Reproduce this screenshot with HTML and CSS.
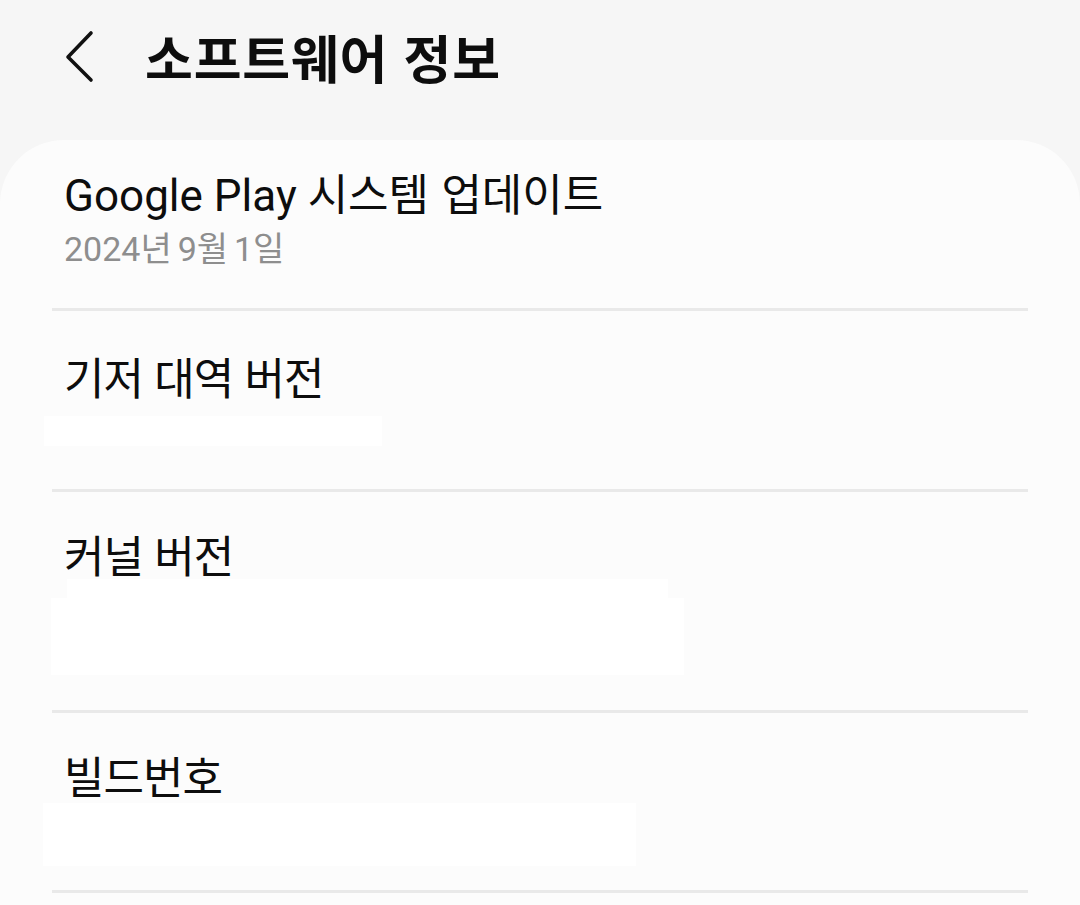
FILE: index.html
```html
<!DOCTYPE html>
<html lang="ko">
<head>
<meta charset="utf-8">
<title>소프트웨어 정보</title>
<link rel="stylesheet" href="styles.css">
</head>
<body>
<div class="screen">
  <header class="appbar">
    <button class="back" aria-label="뒤로">
      <svg width="40" height="60" viewBox="0 0 40 60">
        <polyline points="30,6 7,30 30,53" fill="none" stroke="#111" stroke-width="3.6" stroke-linecap="round" stroke-linejoin="round"/>
      </svg>
    </button>
    <h1 class="title">소프트웨어 정보</h1>
  </header>
  <main class="card">
    <div class="row row-1">
      <div class="row-title"><span class="latin">Google Play</span> <span class="ko">시스템 업데이트</span></div>
      <div class="row-sub"><span class="latin">2024</span><span class="ko">년</span> <span class="latin">9</span><span class="ko">월</span> <span class="latin">1</span><span class="ko">일</span></div>
    </div>
    <div class="row row-2">
      <div class="row-title"><span class="ko">기저 대역 버전</span></div>
      <div class="mask mask-a"></div>
    </div>
    <div class="row row-3">
      <div class="row-title"><span class="ko">커널 버전</span></div>
      <div class="mask mask-b"></div>
      <div class="mask mask-c"></div>
    </div>
    <div class="row row-4">
      <div class="row-title"><span class="ko">빌드번호</span></div>
      <div class="mask mask-d"></div>
    </div>
  </main>
</div>
</body>
</html>
```

FILE: styles.css
```css
html, body {
  margin: 0;
  padding: 0;
  background: #f6f6f6;
}
body {
  font-family: Roboto, "Noto Sans CJK KR", sans-serif;
  color: #111;
  width: 1080px;
  height: 905px;
  overflow: hidden;
}
.screen {
  display: flex;
  flex-direction: column;
}
.appbar {
  height: 140px;
  display: flex;
  align-items: flex-start;
  box-sizing: border-box;
  padding-top: 27px;
}
.back {
  margin-left: 61px;
  width: 40px;
  height: 60px;
  padding: 0;
  border: 0;
  background: none;
  display: flex;
}
.title {
  margin: 0 0 0 44px;
  font-family: "Noto Sans CJK KR", sans-serif;
  font-weight: 700;
  font-size: 52px;
  letter-spacing: 0.8px;
  line-height: 60px;
  color: #0d0d0d;
}
.card {
  background: #fcfcfc;
  border-radius: 64px 64px 0 0;
  padding: 0 52px;
  flex: 1;
  min-height: 765px;
}
.row {
  border-bottom: 3px solid #e9e9e9;
  box-sizing: border-box;
  display: flex;
  flex-direction: column;
  align-items: flex-start;
}
.row-title {
  font-size: 44px;
  line-height: 50px;
  margin-left: 12px;
  color: #0d0d0d;
  white-space: nowrap;
}
.ko {
  font-family: "Noto Sans CJK KR", sans-serif;
  letter-spacing: -1px;
}
.row-1 .row-title .ko {
  letter-spacing: 0;
}
.latin {
  font-family: Roboto, sans-serif;
}
.row-sub {
  font-size: 34px;
  line-height: 40px;
  margin-left: 12px;
  color: #8e8e8e;
  white-space: nowrap;
}
.row-sub .ko {
  letter-spacing: -2.5px;
}
.row-1 {
  height: 171px;
  padding-top: 27px;
}
.row-1 .row-sub {
  margin-top: 6px;
}
.row-2 {
  height: 181px;
  padding-top: 40px;
}
.row-3 {
  height: 221px;
  padding-top: 37px;
}
.row-4 {
  height: 180px;
  padding-top: 37px;
}
.mask {
  background: #ffffff;
}
.mask-a {
  margin-left: -8px;
  width: 338px;
  height: 30px;
  margin-top: 11px;
}
.mask-b {
  margin-left: 15px;
  width: 601px;
  height: 19px;
  margin-top: -4px;
}
.mask-c {
  margin-left: -1px;
  width: 633px;
  height: 77px;
}
.mask-d {
  margin-left: -9px;
  width: 593px;
  height: 63px;
  margin-top: -1px;
}
```
